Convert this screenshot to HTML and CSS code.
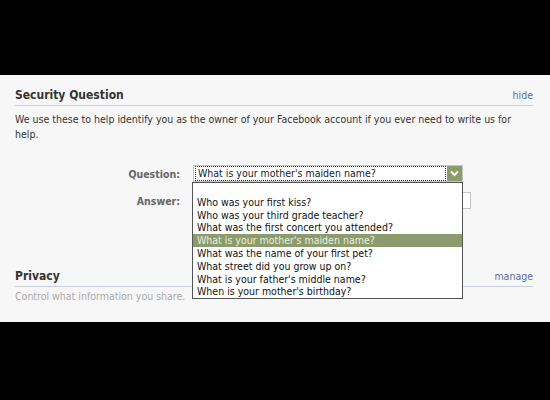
FILE: index.html
```html
<!DOCTYPE html>
<html lang="en">
<head>
  <meta charset="UTF-8">
  <title>Account Settings</title>
  <link rel="stylesheet" href="styles.css">
</head>
<body>
  <div class="panel">
    <!-- security question -->
    <div class="section">
      <div class="section-head">
        <h2>Security Question</h2>
        <a href="#">hide</a>
      </div>
      <p class="intro">We use these to help identify you as the owner of your Facebook account if you ever need to write us for help.</p>

      <div class="form">
        <label class="label">Question:</label>
        <div class="field">
          <div class="select">
            <span class="select-value">What is your mother's maiden name?</span>
            <span class="select-arrow">
              <svg width="9" height="7" viewBox="0 0 9 7"><path d="M1 1.5 L4.5 5 L8 1.5" fill="none" stroke="#fff" stroke-width="2"/></svg>
            </span>
          </div>
          <ul class="dropdown">
            <li>&nbsp;</li>
            <li>Who was your first kiss?</li>
            <li>Who was your third grade teacher?</li>
            <li>What was the first concert you attended?</li>
            <li class="selected">What is your mother's maiden name?</li>
            <li>What was the name of your first pet?</li>
            <li>What street did you grow up on?</li>
            <li>What is your father's middle name?</li>
            <li>When is your mother's birthday?</li>
          </ul>
        </div>
        <label class="label">Answer:</label>
        <div class="field">
          <input type="text" class="answer">
        </div>
      </div>
    </div>

    <!-- privacy -->
    <div class="section privacy">
      <div class="section-head">
        <h2>Privacy</h2>
        <a href="#">manage</a>
      </div>
      <p class="muted">Control what information you share.</p>
    </div>
  </div>
</body>
</html>
```

FILE: styles.css
```css
body {
  margin: 0;
  background: #000;
  font-family: "DejaVu Sans Condensed", "DejaVu Sans", sans-serif;
  font-size: 10.5px;
  color: #333;
}
.panel {
  margin-top: 75px;
  height: 247px;
  background: #f7f7f7;
  padding: 13px 17px 0 15px;
  box-sizing: border-box;
}
/* section title with link on the right */
.section-head {
  display: flex;
  justify-content: space-between;
  align-items: baseline;
  border-bottom: 1px solid #c9cfdb;
  padding-bottom: 2px;
}
.section-head h2 {
  margin: 0;
  font-size: 12px;
  line-height: 15px;
  font-weight: bold;
  color: #333;
}
.section-head a {
  color: #5f6d9c;
  text-decoration: none;
  font-size: 10.5px;
}
.intro {
  margin: 6px 0 0;
  line-height: 15px;
}
/* question / answer rows */
.form {
  display: grid;
  grid-template-columns: 165px 278px;
  column-gap: 13px;
  row-gap: 10px;
  margin-top: 23px;
  align-items: center;
}
.label {
  text-align: right;
  font-weight: bold;
  color: #666;
}
.field {
  position: relative;
}
.select {
  display: flex;
  align-items: center;
  width: 270px;
  height: 17px;
  border: 1px solid #c3c3c3;
  background: #fff;
  box-sizing: border-box;
}
.select-value {
  flex: 1;
  height: 13px;
  line-height: 13px;
  margin-left: 1px;
  margin-right: 1px;
  padding-left: 2px;
  border: 1px dotted #333;
  color: #222;
}
.select-arrow {
  display: flex;
  align-items: center;
  justify-content: center;
  width: 15px;
  height: 15px;
  background: #8a9c6c;
}
.dropdown {
  position: absolute;
  top: 17px;
  left: -1px;
  width: 271px;
  margin: 0;
  padding: 0;
  list-style: none;
  background: #fff;
  border: 1px solid #555;
  box-sizing: border-box;
  z-index: 2;
}
.dropdown li {
  height: 12.8px;
  line-height: 12.8px;
  padding-left: 4px;
  color: #111;
  white-space: nowrap;
}
.dropdown li.selected {
  background: #8c9b6e;
  color: #e9efdc;
}
.answer {
  display: block;
  width: 278px;
  height: 17px;
  margin: 0;
  border: 1px solid #c3c3c3;
  background: #fff;
  box-sizing: border-box;
}
.privacy {
  margin-top: 60px;
}
.muted {
  margin: 2px 0 0;
  color: #aaa;
  line-height: 15px;
}
```
